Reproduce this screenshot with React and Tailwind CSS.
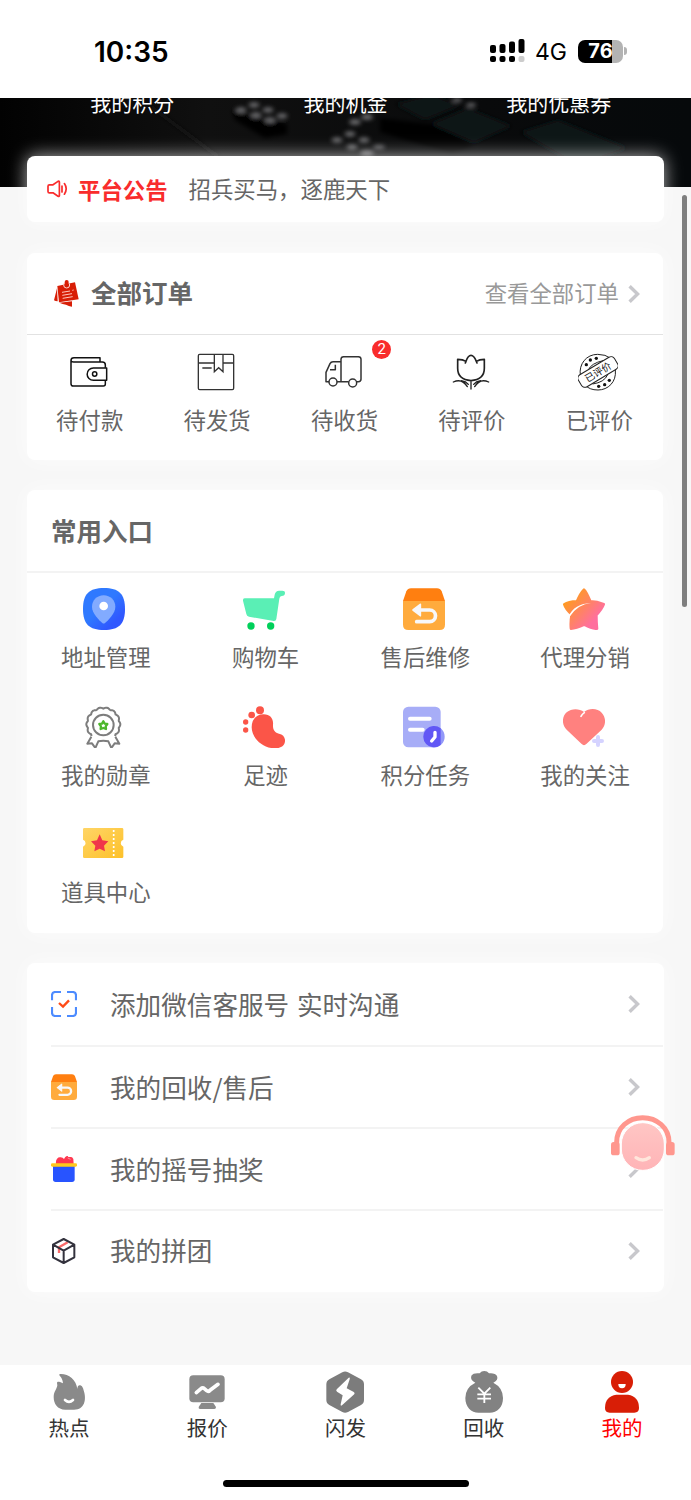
import { useId } from "react";

const wavyRing = (cx, cy, r, amp, bumps, from, to) => {
  const points = [];
  for (let deg = from; deg <= to; deg += 3) {
    const a = (deg * Math.PI) / 180;
    const rr = r + amp * Math.abs(Math.cos((a * bumps) / 2));
    points.push(`${(cx + rr * Math.cos(a)).toFixed(1)},${(cy + rr * Math.sin(a)).toFixed(1)}`);
  }
  return points.join(" ");
};

const Chevron = () => (
  <svg className="h-[18px] w-3 shrink-0" viewBox="0 0 12 18" fill="none" stroke="#c8c8cc" strokeWidth="3.4">
    <path d="M1.6 1.2 9.6 9 1.6 16.8" />
  </svg>
);

const Speaker = () => (
  <svg className="h-[18px] w-[21px]" viewBox="0 0 21 18" fill="none" stroke="#f92c2c" strokeWidth="1.7" strokeLinecap="round" strokeLinejoin="round">
    <path d="M6 4.8H2.4Q1 4.8 1 6.2v5.2q0 1.4 1.4 1.4H6l5 3.4q1.4.6 1.4-.8V2.2q0-1.4-1.4-.8z" />
    <path d="M15 6v6M17.4 3.6q3.6 5.2 0 10.6" />
  </svg>
);

const NotesIcon = () => (
  <svg className="h-[27px] w-[25px]" viewBox="0 0 75 81">
    <path fill="#d81e06" d="M9 25 0 61q4 3 11 3zM16 68l38-4v16q-10-1-18-6-10-2-20-6z" />
    <path fill="#d81e06" d="m10 18 53-11 11 51-59 9z" />
    <g fill="none" stroke="#ffc9c0" strokeWidth="3">
      <path d="m24 37 24-4M25 46l29-5M26 55l30-5M55 31l4-1" />
    </g>
    <circle cx="38" cy="15" r="9" fill="#d81e06" stroke="#ffd5cf" strokeWidth="3" />
    <circle cx="38" cy="6" r="6" fill="#d81e06" />
  </svg>
);

const WalletIcon = () => (
  <svg className="h-[38px] w-[38px]" viewBox="0 0 114 114" fill="none" stroke="#111" strokeWidth="4.5" strokeLinejoin="round">
    <path d="M90 27V14H12Q3 14 3 22v70q0 7 7 7h90q6 0 6-6V82M3 22q0 5 8 5h86q9 0 9 9v8" />
    <path d="M110 45H70a18 18 0 0 0 0 37h40z" />
    <circle cx="74" cy="63" r="6.5" />
  </svg>
);

const ParcelIcon = () => (
  <svg className="h-[38px] w-[38px]" viewBox="0 0 114 114" fill="none" stroke="#333" strokeWidth="4">
    <rect x="4" y="4" width="106" height="106" rx="4" />
    <path d="M4 30h48M78 30h32M16 45h28M52 4v52l13-12 13 12V4" />
  </svg>
);

const TruckIcon = () => (
  <svg className="h-[38px] w-[38px]" viewBox="0 0 114 114" fill="none" stroke="#333" strokeWidth="4.5" strokeLinejoin="round">
    <path d="M15 86H6V58l12-26q3-6 9-6h24M34 35v15H18M39 86h35M51 86V19q0-8 8-8h44q8 0 8 8v60q0 7-8 7h-5" />
    <circle cx="27" cy="87" r="12" />
    <circle cx="86" cy="90" r="12" />
  </svg>
);

const TulipIcon = () => (
  <svg className="h-[38px] w-[38px]" viewBox="0 0 114 114" fill="none" stroke="#222" strokeWidth="5" strokeLinecap="round" strokeLinejoin="round">
    <path d="M42 25Q48 7 57 7t16 18q9-6 24-6v27q0 34-40 37-40-3-40-37V19q16 0 25 6zM42 25l-2 5M73 25l2 5" />
    <path d="M57 86v22M4 87q26-12 42 14M110 87Q84 75 68 101M28 83q14 2 21 11M86 83q-14 2-21 11" strokeWidth="4" />
  </svg>
);

const StampIcon = () => (
  <svg className="h-10 w-10" viewBox="0 0 120 120" fill="none" stroke="#222" strokeWidth="3">
    <path d="M7 70C2 36 25 7 59 7q24 0 39 12M112 54c4 36-22 60-52 60-18 0-28-5-37-13" />
    <path d="M31 54q8-20 44-28M89 68q-10 23-45 28" />
    <g transform="rotate(-31 60 60)">
      <rect x="-3" y="39" width="126" height="42" rx="12" fill="#fff" />
      <text x="60" y="71" textAnchor="middle" fill="#111" stroke="none" fontSize="29" className="font-['Noto_Sans_CJK_SC',sans-serif]">已评价</text>
    </g>
    <g fill="#111" stroke="none">
      <circle cx="25" cy="38" r="5" /><circle cx="37" cy="24" r="5" /><circle cx="55" cy="19" r="5" />
      <circle cx="62" cy="103" r="5" /><circle cx="80" cy="98" r="5" /><circle cx="94" cy="85" r="5" />
    </g>
  </svg>
);

const PinIcon = () => (
  <svg className="h-[42px] w-[42px]" viewBox="0 0 126 126">
    <defs>
      <linearGradient id="pin" x1="0.2" y1="0.2" x2="0.9" y2="0.95">
        <stop offset="0.35" stopColor="#2f79ff" />
        <stop offset="0.8" stopColor="#3058ff" />
      </linearGradient>
    </defs>
    <path fill="url(#pin)" d="M63 0c45 0 63 18 63 63s-18 63-63 63S0 108 0 63 18 0 63 0z" />
    <path fill="#82abff" d="M62 22c20 0 35 15 35 34 0 20-21 40-31 49q-4 3-8 0C48 96 27 76 27 56c0-19 15-34 35-34z" />
    <circle cx="62" cy="54" r="13" fill="#fff" />
  </svg>
);

const CartIcon = () => (
  <svg className="h-[42px] w-[42px]" viewBox="0 0 126 126">
    <path fill="#5aefb5" d="M6 31h87l2-11Q98 8 108 8h10q8 0 8 7 0 9-10 9-6 0-7 8l-9 61q-1 7-8 6l-74-13q-7-2-8-8L0 38q-1-7 6-7z" />
    <circle cx="24" cy="114" r="11" fill="#00d05a" />
    <circle cx="83" cy="114" r="11" fill="#00d05a" />
  </svg>
);

const ReturnBox = ({ className }) => (
  <svg className={className} viewBox="0 0 126 126">
    <path fill="#ffab3d" d="M0 38h126v72q0 16-16 16H16q-16 0-16-16z" />
    <path fill="#ff7f10" d="M24 1h78q10 0 14 9l10 29H0l10-29q4-9 14-9z" />
    <path d="M41 101h39a17 17 0 0 0 0-35H46" fill="none" stroke="#f7f8fa" strokeWidth="11" strokeLinecap="round" />
    <path fill="#f7f8fa" stroke="#f7f8fa" strokeWidth="5" strokeLinejoin="round" d="m30 66 22-17v34z" />
  </svg>
);

const StarIcon = () => (
  <svg className="h-[42px] w-[42px]" viewBox="0 0 126 126">
    <defs>
      <linearGradient id="star" x1="0" y1="0.1" x2="0.9" y2="0.9">
        <stop offset="0.1" stopColor="#ff9c1c" />
        <stop offset="0.85" stopColor="#ff6f9e" />
      </linearGradient>
    </defs>
    <path fill="url(#star)" stroke="url(#star)" strokeWidth="8" strokeLinejoin="round" d="M63 5q7 6 19 35 20 0 40 9-5 14-22 32 0 19 2 41-14 1-38-12-25 12-40 12-2-19 2-43Q8 63 4 49q12-8 38-9Q52 16 63 5z" />
    <path fill="#fff" d="M16 87Q34 46 84 46 46 48 21 85q-4 6-5 22-5 3-8-9z" />
  </svg>
);

const MedalIcon = () => (
  <svg className="h-[42px] w-[42px]" viewBox="0 0 126 126" fill="none" stroke="#7d7d7d" strokeWidth="6" strokeLinejoin="round">
    <polyline points={wavyRing(61, 55, 47, 4, 14, -225, 45)} />
    <path d="m25 92-12 21 14-1 10 14 9-20q15-4 30 0l9 20 10-14 14 1-12-21" />
    <circle cx="61" cy="57" r="31" />
    <path stroke="#4cb72b" strokeWidth="7" d="m61 46 4 7 8 1-5 7 1 8-8-3-8 3 1-8-5-7 8-1z" />
  </svg>
);

const FootIcon = () => (
  <svg className="h-[42px] w-[42px]" viewBox="0 0 126 126" fill="#fb5548">
    <circle cx="8" cy="48" r="8" />
    <circle cx="8" cy="72" r="8" />
    <circle cx="26" cy="27" r="10" />
    <circle cx="51" cy="13" r="12" />
    <path d="M62 25c20 0 30 14 28 32-1 14 6 25 18 26 12 2 19 11 18 23-1 15-14 21-30 21-36 0-70-30-70-63 0-24 14-39 36-39z" />
  </svg>
);

const TaskIcon = () => (
  <svg className="h-[42px] w-[42px]" viewBox="0 0 126 126">
    <rect y="2" width="113" height="122" rx="16" fill="#a7adf7" />
    <path d="M21 38h59M21 71h38" stroke="#fff" strokeWidth="12" strokeLinecap="round" />
    <circle cx="93" cy="92" r="32" fill="#9298f8" />
    <path fill="#6157f5" d="M113 67v50a32 32 0 1 1 0-50z" />
    <path d="M96 79v14l-10 12" fill="none" stroke="#fff" strokeWidth="10" strokeLinecap="round" strokeLinejoin="round" />
  </svg>
);

const HeartIcon = () => (
  <svg className="h-[42px] w-[42px]" viewBox="0 0 126 126">
    <path fill="#ff817f" d="M63 18C78 5 104 6 116 20c14 15 13 37 0 51l-46 43q-7 7-14 0L11 71C-4 55-4 33 11 19 26 6 49 7 63 18z" />
    <path d="M54 31q3-6 10-11" fill="none" stroke="#fff" strokeWidth="5" strokeLinecap="round" />
    <path d="M105 93v24M93 105h24" stroke="#d5d3ff" strokeWidth="12" strokeLinecap="round" />
  </svg>
);

const TicketIcon = () => {
  const id = useId();
  return (
    <svg className="h-[42px] w-[42px]" viewBox="0 0 126 126">
      <defs>
        <linearGradient id={id} x1="0" y1="0" x2="1" y2="1">
          <stop stopColor="#ffd566" />
          <stop offset="1" stopColor="#fdc12a" />
        </linearGradient>
      </defs>
      <g transform="translate(0 3)">
        <path fill={`url(#${id})`} d="M4 12h113q4 0 4 4v31a11 11 0 0 0 0 21v30q0 4-4 4H4q-4 0-4-4V68a11 11 0 0 0 0-21V16q0-4 4-4z" />
        <path d="M92 18v82" stroke="#fff" strokeWidth="5" strokeDasharray="6 6" />
        <path fill="#f0364a" d="m50 31 8 18 18 3-13 13 3 17-16-8-16 8 3-17-13-13 18-3z" />
      </g>
    </svg>
  );
};

const ScanIcon = () => (
  <svg className="h-[26px] w-[26px]" viewBox="0 0 78 78" fill="none" strokeWidth="6.5">
    <path stroke="#4c8bff" d="M3 28V13Q3 3 13 3h17M48 3h17q10 0 10 10v15M75 48v17q0 10-10 10H48M30 75H13Q3 75 3 65V48" />
    <path stroke="#ff4b17" strokeWidth="7" d="m24 36 12 11 18-19" />
  </svg>
);

const GiftIcon = () => (
  <svg className="h-[26px] w-[26px]" viewBox="0 0 78 78">
    <path fill="#ff374f" d="M15 24C13 10 21 2 29 4q7 1 10 5 4-10 11-9l2 3 7 0q5-1 8 6l1 15z" />
    <path d="m50 6 9 4" stroke="#ffb3bc" strokeWidth="2" />
    <path fill="#2854ff" d="M6 28h65v42q0 8-8 8H14q-8 0-8-8z" />
    <rect y="22" width="78" height="10" rx="4" fill="#ffc91d" />
  </svg>
);

const CubeIcon = () => (
  <svg className="h-[26px] w-[26px]" viewBox="0 0 78 78" fill="none" strokeWidth="6" strokeLinejoin="round">
    <path stroke="#fa6b6b" strokeWidth="7" d="M50 13 24 28v17" />
    <path stroke="#33323d" d="m38 3 32 17v38L38 75 6 58V20zM6 20l32 18 32-18M38 38v37" />
  </svg>
);

const FlameIcon = () => (
  <svg className="h-[42px] w-[42px]" viewBox="0 0 126 126">
    <path fill="#8a8a8a" d="M37 9c24-1 48 17 51 45 0-8 4-13 9-11 8 3 9 12 12 22 5 20 2 50-31 51H52c-24 0-35-18-35-38 0-16 10-24 11-35l-1-7c0-4 4-5 9-3l9 4c-1-11-4-17-10-23-2-3-1-5 2-5z" />
    <path d="M51 87q12 11 24 0" fill="none" stroke="#fff" strokeWidth="8" strokeLinecap="round" />
  </svg>
);

const QuoteIcon = () => (
  <svg className="h-[42px] w-[42px]" viewBox="0 0 126 126">
    <rect x="10" y="13" width="106" height="81" rx="12" fill="#8a8a8a" />
    <path fill="#8a8a8a" d="M46 96h36l8 12q0 6-5 6H42q-5 0-4-6z" />
    <path d="m31 65 14-12q5-5 10 0l7 6q5 4 10-1l24-18" fill="none" stroke="#fff" strokeWidth="11" strokeLinecap="round" strokeLinejoin="round" />
  </svg>
);

const FlashIcon = () => (
  <svg className="h-[42px] w-[42px]" viewBox="0 0 126 126">
    <path fill="#7c7c7c" d="M55 4q8-5 17 0l39 21q9 5 9 15v47q0 10-9 15l-39 21q-9 5-17 0L16 102q-9-5-9-15V40q0-10 9-15z" />
    <path fill="#fff" d="M74 20q5-3 3 5l-9 27 20 10q7 4 1 9l-35 32q-5 3-4-3l6-27-17-11q-5-4 0-8z" />
  </svg>
);

const MoneyBagIcon = () => (
  <svg className="h-[42px] w-[42px]" viewBox="0 0 126 126">
    <path fill="#828282" d="M37 35Q21 27 25 14 31 5 50 7q5-7 14-7t14 7q18-2 24 8 5 12-11 20 29 15 29 46c0 28-17 44-40 44H47c-23 0-40-17-40-44q0-31 30-46z" />
    <path d="m46 50 18 18 18-18M64 66v30M43 70h41M43 83h41" fill="none" stroke="#fff" strokeWidth="5.5" />
  </svg>
);

const ProfileIcon = () => (
  <svg className="h-[42px] w-[42px]" viewBox="0 0 126 126">
    <circle cx="63" cy="33" r="33" fill="#d81e06" />
    <path fill="#d81e06" d="M46 71h35q33 5 33 40 0 14-14 14H26q-14 0-14-14 0-35 34-40z" />
    <path fill="#fff" d="M52 39h22q0 13-11 13T52 39z" />
  </svg>
);

const HeadsetIcon = () => (
  <svg className="h-14 w-16" viewBox="0 0 192 168">
    <defs>
      <linearGradient id="face" x1="0" y1="0" x2="0" y2="1">
        <stop stopColor="#ffc6c4" />
        <stop offset="1" stopColor="#ffb4b7" />
      </linearGradient>
    </defs>
    <rect x="31" y="23" width="129" height="143" rx="64" fill="url(#face)" stroke="#fff" strokeWidth="3" />
    <path d="M17 85v-3C17 38 52 8 95 8s79 30 79 74v3" fill="none" stroke="#ff978e" strokeWidth="15" />
    <rect y="81" width="26" height="40" rx="8" fill="#ff978e" />
    <rect x="165" y="81" width="26" height="40" rx="8" fill="#ff978e" />
    <path d="M75 128q20 14 40 0" fill="none" stroke="#ffe6dc" strokeWidth="10" strokeLinecap="round" />
  </svg>
);

const HeroTexture = () => (
  <svg className="absolute inset-0 h-full w-full" viewBox="0 0 691 89" preserveAspectRatio="none">
    <defs>
      <linearGradient id="hero" x1="0" x2="1" y1="0" y2="0">
        <stop stopColor="#020202" />
        <stop offset="0.3" stopColor="#101010" />
        <stop offset="0.7" stopColor="#090a0b" />
        <stop offset="1" stopColor="#06090b" />
      </linearGradient>
      <filter id="soft"><feGaussianBlur stdDeviation="2" /></filter>
    </defs>
    <rect width="691" height="89" fill="url(#hero)" />
    <g filter="url(#soft)">
      <path fill="#111214" d="m430 26 38-16 44 18-38 17zM395 6l38-10 26 12-34 14zM520 34l38-12 70 28-50 18z" />
      <path fill="#030304" d="m380 20 50 6 44 22-22 8-72-22zM232 12l55 14v10l-22 4-30-18z" />
      <path stroke="#191919" strokeWidth="2" d="m150 8 70 52" />
      <g fill="#68686a">
        <ellipse cx="241" cy="12" rx="5.5" ry="2.8" /><ellipse cx="254" cy="7" rx="5.5" ry="2.8" />
        <ellipse cx="256" cy="17" rx="5.5" ry="2.8" /><ellipse cx="268" cy="12" rx="5.5" ry="2.8" />
        <ellipse cx="270" cy="22" rx="5.5" ry="2.8" /><ellipse cx="282" cy="18" rx="5.5" ry="2.8" />
        <ellipse cx="355" cy="24" rx="6" ry="3" /><ellipse cx="367" cy="19" rx="6" ry="3" />
        <ellipse cx="350" cy="36" rx="5.5" ry="2.8" /><ellipse cx="337" cy="42" rx="5.5" ry="2.8" />
        <ellipse cx="364" cy="42" rx="5.5" ry="2.8" /><ellipse cx="352" cy="49" rx="5.5" ry="2.8" />
        <ellipse cx="379" cy="49" rx="6" ry="2" /><ellipse cx="367" cy="55" rx="7" ry="3" />
        <ellipse cx="471" cy="7" rx="5" ry="2" /><ellipse cx="457" cy="2" rx="5" ry="2" />
      </g>
    </g>
  </svg>
);

const orders = [
  { label: "待付款", Icon: WalletIcon },
  { label: "待发货", Icon: ParcelIcon },
  { label: "待收货", Icon: TruckIcon, badge: 2 },
  { label: "待评价", Icon: TulipIcon },
  { label: "已评价", Icon: StampIcon },
];

const entries = [
  { label: "地址管理", icon: <PinIcon /> },
  { label: "购物车", icon: <CartIcon /> },
  { label: "售后维修", icon: <ReturnBox className="h-[42px] w-[42px]" /> },
  { label: "代理分销", icon: <StarIcon /> },
  { label: "我的勋章", icon: <MedalIcon /> },
  { label: "足迹", icon: <FootIcon /> },
  { label: "积分任务", icon: <TaskIcon /> },
  { label: "我的关注", icon: <HeartIcon /> },
  { label: "道具中心", icon: <TicketIcon /> },
];

const links = [
  { label: "添加微信客服号 实时沟通", icon: <ScanIcon /> },
  { label: "我的回收/售后", icon: <ReturnBox className="h-[26px] w-[26px]" /> },
  { label: "我的摇号抽奖", icon: <GiftIcon /> },
  { label: "我的拼团", icon: <CubeIcon /> },
];

const tabs = [
  { label: "热点", Icon: FlameIcon },
  { label: "报价", Icon: QuoteIcon },
  { label: "闪发", Icon: FlashIcon },
  { label: "回收", Icon: MoneyBagIcon },
  { label: "我的", Icon: ProfileIcon, active: true },
];

const StatusBar = () => (
  <div className="flex h-[98px] items-center justify-between bg-white pr-[64px] pl-[94px] pt-1 font-['Inter',sans-serif] text-black">
    <span className="pt-px text-[28px] leading-8 font-semibold">10:35</span>
    <div className="flex items-center">
      <svg className="h-6 w-9" viewBox="0 0 36 24">
        <rect x="0" y="6" width="6" height="8" rx="2" />
        <rect x="9.5" y="5" width="6" height="9" rx="2" />
        <rect x="19" y="2.5" width="6" height="11.5" rx="2" />
        <rect x="28.5" y="0" width="6" height="14" rx="2" />
        <rect x="0" y="17" width="6" height="6" rx="2" />
        <rect x="9.5" y="17" width="6" height="6" rx="2" />
        <rect x="19" y="17" width="6" height="6" rx="2" />
        <rect x="28.5" y="17" width="6" height="6" rx="2" fill="#ccc" />
      </svg>
      <span className="ml-[9px] w-[33px] pt-0.5 text-[23px] leading-8">4G</span>
      <div className="ml-[10px] flex h-[23px] w-[45px] items-center justify-center rounded-[7px] bg-[linear-gradient(90deg,#000_76%,#b3b3b3_76%)]">
        <span className="text-[20px] leading-none font-bold text-white">76</span>
      </div>
      <div className="ml-px h-2 w-[3px] rounded-r-full bg-[#b3b3b3]" />
    </div>
  </div>
);

const Card = ({ className, children }) => (
  <section className={`rounded-lg bg-white shadow-[0_0_22px_rgba(255,255,255,0.75)] ${className}`}>{children}</section>
);

export default function App() {
  return (
    <div lang="zh-CN" className="relative flex h-[1500px] w-[691px] flex-col overflow-hidden bg-[#f7f7f7] font-['Noto_Sans_CJK_SC',sans-serif] text-[#666]">
      <StatusBar />

      <div className="relative h-[89px] shrink-0 overflow-hidden bg-black">
        <HeroTexture />
        <div className="relative -mt-[11px] grid grid-cols-3 px-[25.5px] text-center text-[21px] leading-[30px] text-white">
          <span>我的积分</span>
          <span>我的机金</span>
          <span>我的优惠券</span>
        </div>
      </div>

      <main className="relative -mt-[31px] flex flex-1 flex-col pr-7 pl-[27px]">
        <section className="-mr-px flex h-[66px] items-center rounded-lg bg-white pl-5 shadow-[0_0_18px_rgba(255,255,255,0.7)]">
          <Speaker />
          <span className="ml-[10px] pb-px text-[22.4px] leading-8 font-bold text-[#f92c2c]">平台公告</span>
          <span className="ml-[21px] pb-0.5 text-[22.4px] leading-8">招兵买马，逐鹿天下</span>
        </section>

        <Card className="mt-[31px] h-[207px]">
          <div className="flex h-[82px] items-center border-b border-[#e2e2e2] pr-[23px] pl-[27px]">
            <NotesIcon />
            <h2 className="ml-3 pb-[3px] text-[25.5px] leading-9 font-bold">全部订单</h2>
            <span className="mr-[9px] ml-auto pb-[3px] text-[22.4px] leading-8 text-[#999]">查看全部订单</span>
            <Chevron />
          </div>
          <div className="-ml-px grid grid-cols-5">
            {orders.map(({ label, Icon, badge }) => (
              <div key={label} className="relative flex flex-col items-center pt-[17px]">
                <div className="mr-0.5 flex h-10 items-center">
                  <Icon />
                </div>
                {badge ? (
                  <span className="absolute top-[5px] right-[17px] flex size-[19px] items-center justify-center rounded-full bg-[#f92c2c] font-['Roboto',sans-serif] text-[15px] leading-none text-white">
                    {badge}
                  </span>
                ) : null}
                <span className="mt-[11px] text-[22.4px] leading-8">{label}</span>
              </div>
            ))}
          </div>
        </Card>

        <Card className="mt-[30px] h-[443px]">
          <h2 className="h-[83px] border-b-2 border-[#f3f3f3] pl-6 text-[25.5px] leading-[80px] font-bold">常用入口</h2>
          <div className="-mr-0.5 -ml-px grid grid-cols-4 pt-[15px]">
            {entries.map(({ label, icon }) => (
              <div key={label} className="flex h-[117.5px] flex-col items-center">
                <div className="mr-[3px]">{icon}</div>
                <span className="mt-[10px] text-[22.4px] leading-8">{label}</span>
              </div>
            ))}
          </div>
        </Card>

        <Card className="mt-[30px] -mr-px h-[329px] pl-6">
          {links.map(({ label, icon }) => (
            <div key={label} className="mr-px flex h-[82px] items-center border-b-2 border-[#f3f3f3] pr-[23px] first:h-[84px] last:h-[79px] last:border-b-0">
              {icon}
              <span className="ml-[33px] pb-px text-[25.6px] leading-9 [word-spacing:2px]">{label}</span>
              <span className="ml-auto">
                <Chevron />
              </span>
            </div>
          ))}
        </Card>
      </main>

      <nav className="h-[135px] shrink-0 bg-white">
        <div className="grid grid-cols-5 pt-[6px]">
          {tabs.map(({ label, Icon, active }) => (
            <div key={label} className={`flex flex-col items-center ${active ? "text-[#f00]" : "text-[#333]"}`}>
              <Icon />
              <span className="-mt-px text-[20.5px] leading-[30px]">{label}</span>
            </div>
          ))}
        </div>
        <div className="mx-auto mt-[38px] h-[7px] w-[246px] rounded-full bg-black" />
      </nav>

      <div className="absolute top-[195px] right-1 h-[412px] w-[5px] rounded-full bg-[#7f7f7f]" />
      <div className="absolute top-[1115px] right-4">
        <HeadsetIcon />
      </div>
    </div>
  );
}
